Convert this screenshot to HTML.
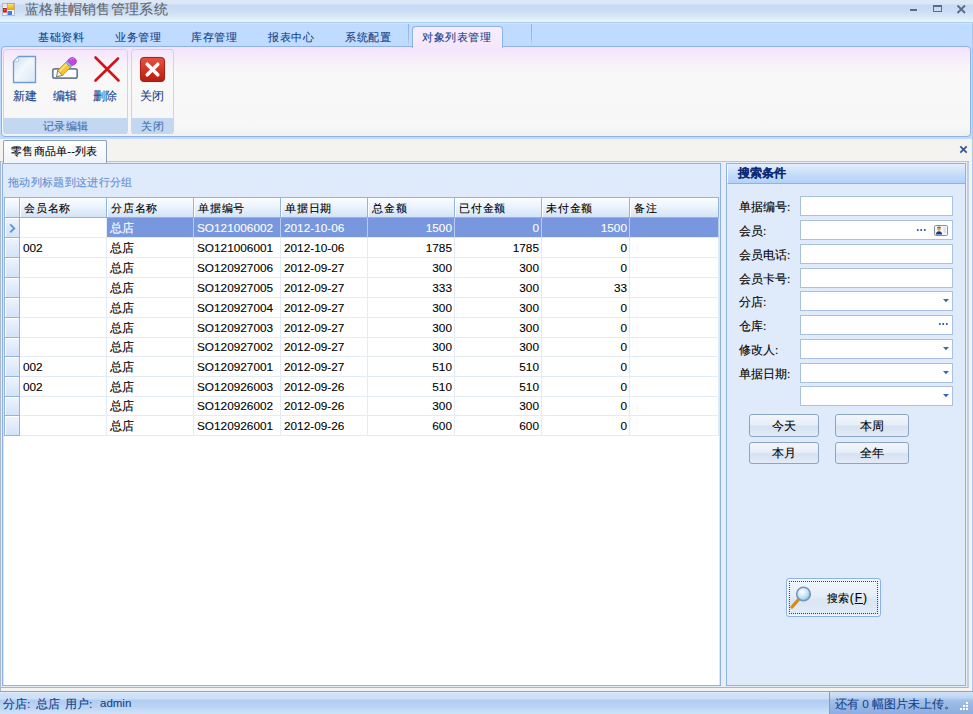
<!DOCTYPE html>
<html><head><meta charset="utf-8">
<style>
*{box-sizing:border-box;margin:0;padding:0}
html,body{width:973px;height:714px;overflow:hidden;background:#f5f3ef;font-family:"Liberation Sans",sans-serif;font-size:12px;color:#000;-webkit-text-stroke:0.1px currentColor}
.abs{position:absolute}
#title{left:0;top:0;width:973px;height:22px;background:linear-gradient(#dde7f5 0,#dce6f4 4px,#c6daf3 5px,#cbddf4 11px,#d7e6f7 16px,#e2f1fb 20px,#e6f6fd 22px)}
#tabrow{left:0;top:23px;width:973px;height:116px;background:#bfdbff;border-top:1px solid #d2e3f8}
.rt{top:30px;font-size:11px;letter-spacing:0.6px;line-height:14px;color:#15428b;white-space:nowrap}
#acttab{left:412px;top:26px;width:91px;height:22px;border:1px solid #8db2e3;border-bottom:none;border-radius:4px 4px 0 0;background:linear-gradient(#f8eefc,#f4e6fb)}
#ribbon{left:1px;top:46px;width:970px;height:91px;border:1px solid #8db2e3;border-radius:4px;background:linear-gradient(#f3e3fb 0,#f5e9fb 7px,#f7f3f9 18px,#f8f8f8 28px,#f7f7f7 78px,#f1f1f2 89px)}
.grp{border:1px solid #c6d7ec;border-radius:3px}
.cap{top:118px;height:16px;background:#c3d7f0;text-align:center;color:#4470b0;font-size:11px;letter-spacing:0.5px;line-height:16px}
.bl{top:89px;font-size:11.75px;line-height:14px;color:#15428b;white-space:nowrap}
#doctab{left:3px;top:140px;width:104px;height:23px;border:1px solid #8ba0bc;border-bottom:none;border-radius:2px 2px 0 0;background:linear-gradient(#fefefe,#eff4fb)}
#content{left:0;top:162px;width:969px;height:526px;border-right:2px solid #c5cedc;background:#e6eefa;border-bottom:1px solid #a7b6cf}
#grid{left:2px;top:163px;width:719px;height:523px;border:1px solid #8db2e3;background:#dae7f9}
#white{left:4px;top:197px;width:715px;height:488px;background:#fff}
#grpbox{left:3px;top:164px;width:717px;height:33px;background:#dfeafa}
#hdr{left:4px;top:197px;width:715px;height:21px;border-left:1px solid #93b3e3;border-top:1px solid #93b3e3;border-bottom:1px solid #93b3e3;background:linear-gradient(#fafcff,#eef5fd 40%,#d3e3f8)}
.hc{top:198px;height:19px;border-right:1px solid #93b3e3;border-left:1px solid #fff;line-height:19px;padding-top:1px;padding-left:3px;font-size:11px;letter-spacing:0.8px;white-space:nowrap}
.cell{height:20px;line-height:20px;padding:0 2px 0 3px;border-right:1px solid #e3ebf7;border-bottom:1px solid #e3ebf7;white-space:nowrap;overflow:hidden;font-size:11.8px;background:#fff}
.cell.sel{background:#7897de;color:#fff;border-right-color:#b9c9ef;border-bottom-color:#e3ebf7}
.r{text-align:right}
.ind{left:4px;width:16px;height:20px;box-shadow:inset 1px 1px 0 #fff;background:linear-gradient(#eef4fd,#d3e3f8);border-left:1px solid #93b3e3;border-right:1px solid #93b3e3;border-bottom:1px solid #93b3e3}
#side{left:726px;top:163px;width:240px;height:523px;border:1px solid #8db2e3;background:#dfeafb}
#sidehdr{left:727px;top:164px;width:238px;height:20px;background:linear-gradient(#e4eefc,#c3dbf9 60%,#b3d2f9);border-bottom:1px solid #8db2e3;border-left:1px solid #fff;color:#0c2a74;font-weight:bold;font-size:12px;padding-left:10px;line-height:19px}
.lab{left:739px;font-size:11.75px;line-height:14px;color:#000;white-space:nowrap}
.inp{left:800px;width:153px;height:20px;background:#fff;border:1px solid #a9c0de}
.btn{height:22px;border:1px solid #8ba5c8;border-radius:3px;background:linear-gradient(#f3f7fc,#e6eef8 45%,#d6e2f1 55%,#e2ebf7);text-align:center;line-height:20px;font-size:11.75px}
#status{left:0;top:691px;width:973px;height:23px;border-top:1px solid #8ea5c6;background:linear-gradient(#e2edfa 0,#d0e1f6 2px,#cddff6 7px,#b0ccf2 8px,#bcd4f3 15px,#d0e2f7 22px)}
#status2{left:829px;top:692px;width:144px;height:22px;border-left:1px solid #7d9ccb;background:linear-gradient(#d3e3f7 0,#bcd3f2 6px,#a3c1ea 8px,#95b5e3 15px,#8eaee0 22px)}
</style></head><body>
<div id="title" class="abs"></div>
<svg class="abs" style="left:0;top:0" width="17" height="17" viewBox="0 0 17 17">
<rect x="2.5" y="3.5" width="12" height="12" fill="#eef1f6" stroke="#b9bcc4"/>
<rect x="3" y="4" width="4" height="3" fill="#dfe6f0"/>
<defs><linearGradient id="gy" x1="0" y1="0" x2="0" y2="1"><stop offset="0" stop-color="#ffe680"/><stop offset="1" stop-color="#e8a800"/></linearGradient></defs>
<rect x="7.5" y="3.5" width="6.5" height="6" fill="url(#gy)" stroke="#c89000" stroke-width="0.6"/>
<rect x="3" y="8" width="3.8" height="4.5" fill="#c41a1a"/>
<rect x="4" y="9" width="1.5" height="1.5" fill="#f07070"/>
<rect x="7.5" y="11" width="4.5" height="4" fill="#3f7fe6"/>
</svg>
<div class="abs" style="left:25px;top:0px;font-size:14px;line-height:18px;color:#5f6670;letter-spacing:0.3px;white-space:nowrap">蓝格鞋帽销售管理系统</div>
<div class="abs" style="left:910px;top:9px;width:7px;height:2px;background:#5a6b86"></div>
<div class="abs" style="left:933px;top:5px;width:9px;height:7px;border:1px solid #5a6b86;border-top-width:2px"></div>
<svg class="abs" style="left:956px;top:4px" width="11" height="10" viewBox="0 0 11 10"><path d="M1.5 1.5L9 9M9 1.5L1.5 9" stroke="#5a6b86" stroke-width="1.8"/></svg>
<div class="abs" style="left:0;top:22px;width:973px;height:1px;background:#abcdf0"></div><div id="tabrow" class="abs"></div><div class="abs" style="left:972px;top:23px;width:1px;height:691px;background:#a9c8ee"></div>
<div class="abs" style="left:408px;top:24px;width:1px;height:22px;background:linear-gradient(#8fb5e5,#9dbde6 70%,rgba(157,189,230,0))"></div><div class="abs" style="left:531px;top:24px;width:1px;height:21px;background:linear-gradient(#8fb5e5,#9dbde6 70%,rgba(157,189,230,0))"></div>
<div class="abs rt" style="left:38px">基础资料</div>
<div class="abs rt" style="left:115px">业务管理</div>
<div class="abs rt" style="left:191px">库存管理</div>
<div class="abs rt" style="left:268px">报表中心</div>
<div class="abs rt" style="left:345px">系统配置</div>
<div id="ribbon" class="abs"></div>
<div id="acttab" class="abs"></div>
<div class="abs rt" style="left:422px">对象列表管理</div>
<div class="abs grp" style="left:3px;top:49px;width:125px;height:85px"></div>
<div class="abs cap" style="left:4px;width:123px">记录编辑</div>
<div class="abs grp" style="left:131px;top:49px;width:43px;height:85px"></div>
<div class="abs cap" style="left:132px;width:41px">关闭</div>
<!-- new icon -->
<svg class="abs" style="left:12px;top:55px" width="26" height="29" viewBox="0 0 26 29">
<defs><linearGradient id="gn" x1="0" y1="0" x2="1" y2="1"><stop offset="0" stop-color="#c9dcf3"/><stop offset="0.45" stop-color="#f3f7fd"/><stop offset="1" stop-color="#d9e7f7"/></linearGradient></defs>
<path d="M6.5 1.5H23.5V27.5H1.5V6.5Z" fill="url(#gn)" stroke="#6f9bd0" stroke-width="1.3"/>
<path d="M1.8 6.5L6.5 1.8V6.5Z" fill="#f7f9fc" stroke="#9ab6d8" stroke-width="0.6"/>
</svg>
<!-- edit icon -->
<svg class="abs" style="left:51px;top:56px" width="30" height="26" viewBox="0 0 30 26">
<rect x="1.8" y="12.8" width="24.4" height="9.4" rx="2" fill="#fff" stroke="#6d7f96" stroke-width="1.7"/>
<path d="M5.5 21L6.73 14.33L11.67 19.27Z" fill="#f4efe0" stroke="#444" stroke-width="0.7"/>
<path d="M6.73 14.33L14.73 6.33L19.67 11.27L11.67 19.27Z" fill="#f6c533" stroke="#a87d12" stroke-width="0.6"/>
<path d="M8.5 15.5L16 8" stroke="#fde48a" stroke-width="1.2"/>
<path d="M14.73 6.33L16.33 4.73L21.27 9.67L19.67 11.27Z" fill="#8ab0e0" stroke="#5a7fb0" stroke-width="0.5"/>
<path d="M16.33 4.73L18.5 2.6Q21.5 0 24.3 2.8Q27 5.6 24.3 8L21.27 9.67Z" fill="#c442e6" stroke="#8a2aa8" stroke-width="0.5"/>
<path d="M19.5 3.5Q21.5 2 23 3" stroke="#f0b0ff" stroke-width="1"/>
</svg>
<!-- delete icon -->
<svg class="abs" style="left:93px;top:55px" width="28" height="28" viewBox="0 0 28 28">
<path d="M2.5 2.5L25.5 25.5M25 3.5L2.5 25.5" stroke="#d0141a" stroke-width="2.6" stroke-linecap="round"/>
</svg>
<!-- close icon -->
<svg class="abs" style="left:139px;top:56px" width="27" height="27" viewBox="-0.5 -0.5 28 28">
<defs><linearGradient id="gc" x1="0" y1="0" x2="0" y2="1"><stop offset="0" stop-color="#e8513f"/><stop offset="1" stop-color="#b71c10"/></linearGradient></defs>
<rect x="1" y="1" width="25" height="25" rx="3.5" fill="url(#gc)" stroke="#9c1a0e" stroke-width="1"/>
<path d="M8 8L19 19M19 8L8 19" stroke="#fff" stroke-width="3.6" stroke-linecap="round"/>
</svg>
<div class="abs bl" style="left:13px">新建</div>
<div class="abs bl" style="left:53px">编辑</div>
<div class="abs bl" style="left:93px">删除</div>
<div class="abs bl" style="left:140px">关闭</div>
<!-- doc tab -->
<div class="abs" style="left:0;top:161px;width:969px;height:1px;background:#b7c3d6"></div><div id="content" class="abs"></div><div id="doctab" class="abs"></div>
<div class="abs" style="left:11px;top:145px;font-size:11px;letter-spacing:0.25px;line-height:13px;white-space:nowrap">零售商品单--列表</div>
<svg class="abs" style="left:959px;top:145px" width="9" height="9" viewBox="0 0 9 9"><path d="M1.3 1.3L7.7 7.7M7.7 1.3L1.3 7.7" stroke="#2f5597" stroke-width="1.7"/></svg>
<!-- grid -->
<div class="abs" style="left:0;top:161px;width:1px;height:530px;background:#a9b9d0"></div><div id="grid" class="abs"></div>
<div id="grpbox" class="abs"></div><div id="white" class="abs"></div>
<div class="abs" style="left:8px;top:176px;font-size:11px;letter-spacing:0.35px;line-height:13px;color:#5f8fd2;white-space:nowrap">拖动列标题到这进行分组</div>
<div id="hdr" class="abs"></div>

<div class="abs hc" style="left:5px;width:15px;padding:0"></div>
<div class="abs hc" style="left:20px;width:87px">会员名称</div>
<div class="abs hc" style="left:107px;width:87px">分店名称</div>
<div class="abs hc" style="left:194px;width:87px">单据编号</div>
<div class="abs hc" style="left:281px;width:87px">单据日期</div>
<div class="abs hc" style="left:368px;width:87px">总金额</div>
<div class="abs hc" style="left:455px;width:87px">已付金额</div>
<div class="abs hc" style="left:542px;width:88px">未付金额</div>
<div class="abs hc" style="left:630px;width:89px">备注</div>
<div class="abs ind" style="top:218px;height:20px"></div>
<div class="abs cell" style="left:20px;top:218px;width:87px;height:20px;line-height:20px"></div>
<div class="abs cell sel" style="left:107px;top:218px;width:87px;height:20px;line-height:20px">总店</div>
<div class="abs cell sel" style="left:194px;top:218px;width:87px;height:20px;line-height:20px">SO121006002</div>
<div class="abs cell sel" style="left:281px;top:218px;width:87px;height:20px;line-height:20px">2012-10-06</div>
<div class="abs cell r sel" style="left:368px;top:218px;width:87px;height:20px;line-height:20px">1500</div>
<div class="abs cell r sel" style="left:455px;top:218px;width:87px;height:20px;line-height:20px">0</div>
<div class="abs cell r sel" style="left:542px;top:218px;width:88px;height:20px;line-height:20px">1500</div>
<div class="abs cell sel" style="left:630px;top:218px;width:89px;height:20px;line-height:20px"></div>
<div class="abs ind" style="top:238px;height:20px"></div>
<div class="abs cell" style="left:20px;top:238px;width:87px;height:20px;line-height:20px">002</div>
<div class="abs cell" style="left:107px;top:238px;width:87px;height:20px;line-height:20px">总店</div>
<div class="abs cell" style="left:194px;top:238px;width:87px;height:20px;line-height:20px">SO121006001</div>
<div class="abs cell" style="left:281px;top:238px;width:87px;height:20px;line-height:20px">2012-10-06</div>
<div class="abs cell r" style="left:368px;top:238px;width:87px;height:20px;line-height:20px">1785</div>
<div class="abs cell r" style="left:455px;top:238px;width:87px;height:20px;line-height:20px">1785</div>
<div class="abs cell r" style="left:542px;top:238px;width:88px;height:20px;line-height:20px">0</div>
<div class="abs cell" style="left:630px;top:238px;width:89px;height:20px;line-height:20px"></div>
<div class="abs ind" style="top:258px;height:20px"></div>
<div class="abs cell" style="left:20px;top:258px;width:87px;height:20px;line-height:20px"></div>
<div class="abs cell" style="left:107px;top:258px;width:87px;height:20px;line-height:20px">总店</div>
<div class="abs cell" style="left:194px;top:258px;width:87px;height:20px;line-height:20px">SO120927006</div>
<div class="abs cell" style="left:281px;top:258px;width:87px;height:20px;line-height:20px">2012-09-27</div>
<div class="abs cell r" style="left:368px;top:258px;width:87px;height:20px;line-height:20px">300</div>
<div class="abs cell r" style="left:455px;top:258px;width:87px;height:20px;line-height:20px">300</div>
<div class="abs cell r" style="left:542px;top:258px;width:88px;height:20px;line-height:20px">0</div>
<div class="abs cell" style="left:630px;top:258px;width:89px;height:20px;line-height:20px"></div>
<div class="abs ind" style="top:278px;height:20px"></div>
<div class="abs cell" style="left:20px;top:278px;width:87px;height:20px;line-height:20px"></div>
<div class="abs cell" style="left:107px;top:278px;width:87px;height:20px;line-height:20px">总店</div>
<div class="abs cell" style="left:194px;top:278px;width:87px;height:20px;line-height:20px">SO120927005</div>
<div class="abs cell" style="left:281px;top:278px;width:87px;height:20px;line-height:20px">2012-09-27</div>
<div class="abs cell r" style="left:368px;top:278px;width:87px;height:20px;line-height:20px">333</div>
<div class="abs cell r" style="left:455px;top:278px;width:87px;height:20px;line-height:20px">300</div>
<div class="abs cell r" style="left:542px;top:278px;width:88px;height:20px;line-height:20px">33</div>
<div class="abs cell" style="left:630px;top:278px;width:89px;height:20px;line-height:20px"></div>
<div class="abs ind" style="top:298px;height:20px"></div>
<div class="abs cell" style="left:20px;top:298px;width:87px;height:20px;line-height:20px"></div>
<div class="abs cell" style="left:107px;top:298px;width:87px;height:20px;line-height:20px">总店</div>
<div class="abs cell" style="left:194px;top:298px;width:87px;height:20px;line-height:20px">SO120927004</div>
<div class="abs cell" style="left:281px;top:298px;width:87px;height:20px;line-height:20px">2012-09-27</div>
<div class="abs cell r" style="left:368px;top:298px;width:87px;height:20px;line-height:20px">300</div>
<div class="abs cell r" style="left:455px;top:298px;width:87px;height:20px;line-height:20px">300</div>
<div class="abs cell r" style="left:542px;top:298px;width:88px;height:20px;line-height:20px">0</div>
<div class="abs cell" style="left:630px;top:298px;width:89px;height:20px;line-height:20px"></div>
<div class="abs ind" style="top:318px;height:20px"></div>
<div class="abs cell" style="left:20px;top:318px;width:87px;height:20px;line-height:20px"></div>
<div class="abs cell" style="left:107px;top:318px;width:87px;height:20px;line-height:20px">总店</div>
<div class="abs cell" style="left:194px;top:318px;width:87px;height:20px;line-height:20px">SO120927003</div>
<div class="abs cell" style="left:281px;top:318px;width:87px;height:20px;line-height:20px">2012-09-27</div>
<div class="abs cell r" style="left:368px;top:318px;width:87px;height:20px;line-height:20px">300</div>
<div class="abs cell r" style="left:455px;top:318px;width:87px;height:20px;line-height:20px">300</div>
<div class="abs cell r" style="left:542px;top:318px;width:88px;height:20px;line-height:20px">0</div>
<div class="abs cell" style="left:630px;top:318px;width:89px;height:20px;line-height:20px"></div>
<div class="abs ind" style="top:338px;height:19px"></div>
<div class="abs cell" style="left:20px;top:338px;width:87px;height:19px;line-height:19px"></div>
<div class="abs cell" style="left:107px;top:338px;width:87px;height:19px;line-height:19px">总店</div>
<div class="abs cell" style="left:194px;top:338px;width:87px;height:19px;line-height:19px">SO120927002</div>
<div class="abs cell" style="left:281px;top:338px;width:87px;height:19px;line-height:19px">2012-09-27</div>
<div class="abs cell r" style="left:368px;top:338px;width:87px;height:19px;line-height:19px">300</div>
<div class="abs cell r" style="left:455px;top:338px;width:87px;height:19px;line-height:19px">300</div>
<div class="abs cell r" style="left:542px;top:338px;width:88px;height:19px;line-height:19px">0</div>
<div class="abs cell" style="left:630px;top:338px;width:89px;height:19px;line-height:19px"></div>
<div class="abs ind" style="top:357px;height:20px"></div>
<div class="abs cell" style="left:20px;top:357px;width:87px;height:20px;line-height:20px">002</div>
<div class="abs cell" style="left:107px;top:357px;width:87px;height:20px;line-height:20px">总店</div>
<div class="abs cell" style="left:194px;top:357px;width:87px;height:20px;line-height:20px">SO120927001</div>
<div class="abs cell" style="left:281px;top:357px;width:87px;height:20px;line-height:20px">2012-09-27</div>
<div class="abs cell r" style="left:368px;top:357px;width:87px;height:20px;line-height:20px">510</div>
<div class="abs cell r" style="left:455px;top:357px;width:87px;height:20px;line-height:20px">510</div>
<div class="abs cell r" style="left:542px;top:357px;width:88px;height:20px;line-height:20px">0</div>
<div class="abs cell" style="left:630px;top:357px;width:89px;height:20px;line-height:20px"></div>
<div class="abs ind" style="top:377px;height:20px"></div>
<div class="abs cell" style="left:20px;top:377px;width:87px;height:20px;line-height:20px">002</div>
<div class="abs cell" style="left:107px;top:377px;width:87px;height:20px;line-height:20px">总店</div>
<div class="abs cell" style="left:194px;top:377px;width:87px;height:20px;line-height:20px">SO120926003</div>
<div class="abs cell" style="left:281px;top:377px;width:87px;height:20px;line-height:20px">2012-09-26</div>
<div class="abs cell r" style="left:368px;top:377px;width:87px;height:20px;line-height:20px">510</div>
<div class="abs cell r" style="left:455px;top:377px;width:87px;height:20px;line-height:20px">510</div>
<div class="abs cell r" style="left:542px;top:377px;width:88px;height:20px;line-height:20px">0</div>
<div class="abs cell" style="left:630px;top:377px;width:89px;height:20px;line-height:20px"></div>
<div class="abs ind" style="top:397px;height:19px"></div>
<div class="abs cell" style="left:20px;top:397px;width:87px;height:19px;line-height:19px"></div>
<div class="abs cell" style="left:107px;top:397px;width:87px;height:19px;line-height:19px">总店</div>
<div class="abs cell" style="left:194px;top:397px;width:87px;height:19px;line-height:19px">SO120926002</div>
<div class="abs cell" style="left:281px;top:397px;width:87px;height:19px;line-height:19px">2012-09-26</div>
<div class="abs cell r" style="left:368px;top:397px;width:87px;height:19px;line-height:19px">300</div>
<div class="abs cell r" style="left:455px;top:397px;width:87px;height:19px;line-height:19px">300</div>
<div class="abs cell r" style="left:542px;top:397px;width:88px;height:19px;line-height:19px">0</div>
<div class="abs cell" style="left:630px;top:397px;width:89px;height:19px;line-height:19px"></div>
<div class="abs ind" style="top:416px;height:20px"></div>
<div class="abs cell" style="left:20px;top:416px;width:87px;height:20px;line-height:20px"></div>
<div class="abs cell" style="left:107px;top:416px;width:87px;height:20px;line-height:20px">总店</div>
<div class="abs cell" style="left:194px;top:416px;width:87px;height:20px;line-height:20px">SO120926001</div>
<div class="abs cell" style="left:281px;top:416px;width:87px;height:20px;line-height:20px">2012-09-26</div>
<div class="abs cell r" style="left:368px;top:416px;width:87px;height:20px;line-height:20px">600</div>
<div class="abs cell r" style="left:455px;top:416px;width:87px;height:20px;line-height:20px">600</div>
<div class="abs cell r" style="left:542px;top:416px;width:88px;height:20px;line-height:20px">0</div>
<div class="abs cell" style="left:630px;top:416px;width:89px;height:20px;line-height:20px"></div><svg class="abs" style="left:9px;top:223px" width="7" height="11" viewBox="0 0 7 11"><path d="M1.2 1.4L5.2 5.4L1.2 9.4" fill="none" stroke="#5d93dc" stroke-width="1.9"/></svg>
<!-- side panel -->
<div id="side" class="abs"></div>
<div id="sidehdr" class="abs">搜索条件</div>
<div class="abs lab" style="top:200px">单据编号:</div>
<div class="abs lab" style="top:224px">会员:</div>
<div class="abs lab" style="top:248px">会员电话:</div>
<div class="abs lab" style="top:272px">会员卡号:</div>
<div class="abs lab" style="top:295px">分店:</div>
<div class="abs lab" style="top:319px">仓库:</div>
<div class="abs lab" style="top:343px">修改人:</div>
<div class="abs lab" style="top:367px">单据日期:</div>
<div class="abs inp" style="top:196px"></div>
<div class="abs inp" style="top:220px"></div>
<div class="abs inp" style="top:244px"></div>
<div class="abs inp" style="top:268px"></div>
<div class="abs inp" style="top:291px"></div>
<div class="abs inp" style="top:315px"></div>
<div class="abs inp" style="top:339px"></div>
<div class="abs inp" style="top:363px"></div>
<div class="abs inp" style="top:386px"></div>
<div class="abs" style="left:916px;top:229px;width:10px;height:2px;background:radial-gradient(circle,#3a64b0 0.8px,transparent 1.1px) 0 0/3.5px 2px"></div>
<svg class="abs" style="left:934px;top:225px" width="14" height="11" viewBox="0 0 14 11"><rect x="0.5" y="0.5" width="13" height="10" rx="1.2" fill="#f4f7fb" stroke="#7d8ea6"/><circle cx="5" cy="3.8" r="1.9" fill="#d9a060"/><path d="M3 2.6Q5 0.6 7 2.6L6.6 3H3.4Z" fill="#8a6030"/><path d="M1.8 9.6Q2 6.3 5 6.2Q8 6.3 8.2 9.6Z" fill="#1d3b78"/><path d="M9.5 3H12M9.5 5H12M9.5 7H12" stroke="#b8c4d4" stroke-width="0.8"/></svg>
<svg class="abs" style="left:943px;top:299px" width="7" height="4" viewBox="0 0 7 4"><path d="M0 0H6L3 3.2Z" fill="#3a64b0"/></svg>
<div class="abs" style="left:938px;top:323px;width:10px;height:2px;background:radial-gradient(circle,#3a64b0 0.8px,transparent 1.1px) 0 0/3.5px 2px"></div>
<svg class="abs" style="left:943px;top:347px" width="7" height="4" viewBox="0 0 7 4"><path d="M0 0H6L3 3.2Z" fill="#3a64b0"/></svg>
<svg class="abs" style="left:943px;top:371px" width="7" height="4" viewBox="0 0 7 4"><path d="M0 0H6L3 3.2Z" fill="#3a64b0"/></svg>
<svg class="abs" style="left:943px;top:394px" width="7" height="4" viewBox="0 0 7 4"><path d="M0 0H6L3 3.2Z" fill="#3a64b0"/></svg>
<div class="abs btn" style="left:749px;top:414px;width:70px;height:23px;line-height:21px">今天</div>
<div class="abs btn" style="left:835px;top:414px;width:74px;height:23px;line-height:21px">本周</div>
<div class="abs btn" style="left:749px;top:442px;width:70px">本月</div>
<div class="abs btn" style="left:835px;top:442px;width:74px">全年</div>
<div class="abs btn" style="left:786px;top:578px;width:95px;height:39px;line-height:37px;padding-left:28px;border-color:#8ab2e8;box-shadow:inset 0 0 0 1px #f4f8fe;background:linear-gradient(#f1f6fd,#e8eff9 40%,#dbe6f4 60%,#e3ecf8)"><span style="font-size:11px;letter-spacing:0.3px">搜索</span><span style="font-size:12px;letter-spacing:1px">(<u>F</u>)</span></div>
<div class="abs" style="left:789px;top:581px;width:89px;height:33px;border:1px dotted #444"></div>
<svg class="abs" style="left:789px;top:585px" width="24" height="25" viewBox="0 0 24 25">
<defs><radialGradient id="gm" cx="0.4" cy="0.35" r="0.7"><stop offset="0" stop-color="#ffffff"/><stop offset="0.6" stop-color="#bfe0f8"/><stop offset="1" stop-color="#7fb4e0"/></radialGradient></defs>
<path d="M3 22L10 14" stroke="#d98a1c" stroke-width="3.4" stroke-linecap="round"/>
<circle cx="14.5" cy="9" r="6.8" fill="url(#gm)" stroke="#7894b4" stroke-width="1.6"/>
</svg>
<!-- status -->
<div id="status" class="abs"></div>
<div id="status2" class="abs"></div>
<div class="abs" style="left:3px;top:697px;font-size:11.75px;line-height:13px;color:#15428b;white-space:nowrap">分店:</div>
<div class="abs" style="left:36px;top:697px;font-size:11.75px;line-height:13px;color:#15428b;white-space:nowrap">总店</div>
<div class="abs" style="left:65px;top:697px;font-size:11.75px;line-height:13px;color:#15428b;white-space:nowrap">用户:</div>
<div class="abs" style="left:100px;top:697px;font-size:11.5px;line-height:13px;color:#15428b;white-space:nowrap">admin</div>
<div class="abs" style="left:835px;top:697px;font-size:11.75px;line-height:13px;color:#15428b;white-space:nowrap">还有 0 幅图片未上传。</div>
<svg class="abs" style="left:957px;top:701px" width="12" height="11" viewBox="0 0 12 11"><g fill="#fff"><rect x="9" y="1" width="2" height="2"/><rect x="6" y="4" width="2" height="2"/><rect x="9" y="4" width="2" height="2"/><rect x="3" y="7" width="2" height="2"/><rect x="6" y="7" width="2" height="2"/><rect x="9" y="7" width="2" height="2"/></g></svg>
</body></html>
